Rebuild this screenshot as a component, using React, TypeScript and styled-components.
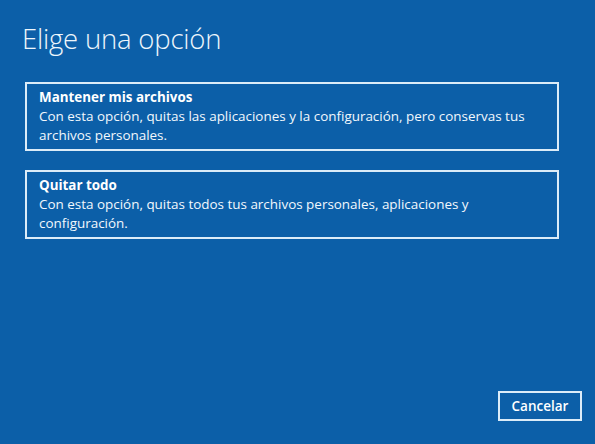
import React from 'react';
import styled, { createGlobalStyle } from 'styled-components';

const GlobalStyle = createGlobalStyle`
    html, body {
        margin: 0;
        padding: 0;
        background: #0c5fa8;
    }
    body {
        font-family: 'Open Sans', 'Noto Sans', sans-serif;
        color: #ffffff;
    }
`;

type Option = Readonly<{
    title: string;
    description: string;
}>;

const options: ReadonlyArray<Option> = [
    {
        title: 'Mantener mis archivos',
        description:
            'Con esta opción, quitas las aplicaciones y la configuración, pero conservas tus archivos personales.',
    },
    {
        title: 'Quitar todo',
        description:
            'Con esta opción, quitas todos tus archivos personales, aplicaciones y configuración.',
    },
];

const App = () => (
    <>
        <GlobalStyle />
        <Screen>
            <Heading>Elige una opción</Heading>
            <OptionList>
                {options.map(({ title, description }) => (
                    <OptionCard key={title} type="button">
                        <OptionTitle>{title}</OptionTitle>
                        <OptionDescription>{description}</OptionDescription>
                    </OptionCard>
                ))}
            </OptionList>
            <Footer>
                <CancelButton type="button">Cancelar</CancelButton>
            </Footer>
        </Screen>
    </>
);

const Screen = styled.main`
    box-sizing: border-box;
    height: 444px;
    display: flex;
    flex-direction: column;
    padding: 20px 13px 23px 25px;
    background: #0c5fa8;
`;

const Heading = styled.h1`
    margin: 0 0 24px -3px;
    font-size: 27.5px;
    font-weight: 300;
    line-height: 38px;
    color: #eef6fc;
    letter-spacing: -0.2px;
`;

const OptionList = styled.div`
    display: flex;
    flex-direction: column;
    gap: 19px;
    width: 534px;
`;

const OptionCard = styled.button`
    box-sizing: border-box;
    display: flex;
    flex-direction: column;
    align-items: flex-start;
    width: 100%;
    padding: 4px 24px 4px 12px;
    border: 2px solid #dcecf8;
    background: transparent;
    color: #ffffff;
    font-family: inherit;
    text-align: left;
    cursor: pointer;
`;

const OptionTitle = styled.span`
    font-size: 13.4px;
    font-weight: 700;
    line-height: 19px;
`;

const OptionDescription = styled.span`
    font-size: 13.45px;
    font-weight: 400;
    line-height: 19px;
    color: #f2f8fd;
`;

const Footer = styled.div`
    margin-top: auto;
    display: flex;
    justify-content: flex-end;
`;

const CancelButton = styled.button`
    box-sizing: border-box;
    width: 84px;
    height: 30px;
    border: 2px solid #dcecf8;
    background: transparent;
    color: #ffffff;
    font-family: inherit;
    font-size: 13.5px;
    font-weight: 600;
    cursor: pointer;
`;

export default App;
